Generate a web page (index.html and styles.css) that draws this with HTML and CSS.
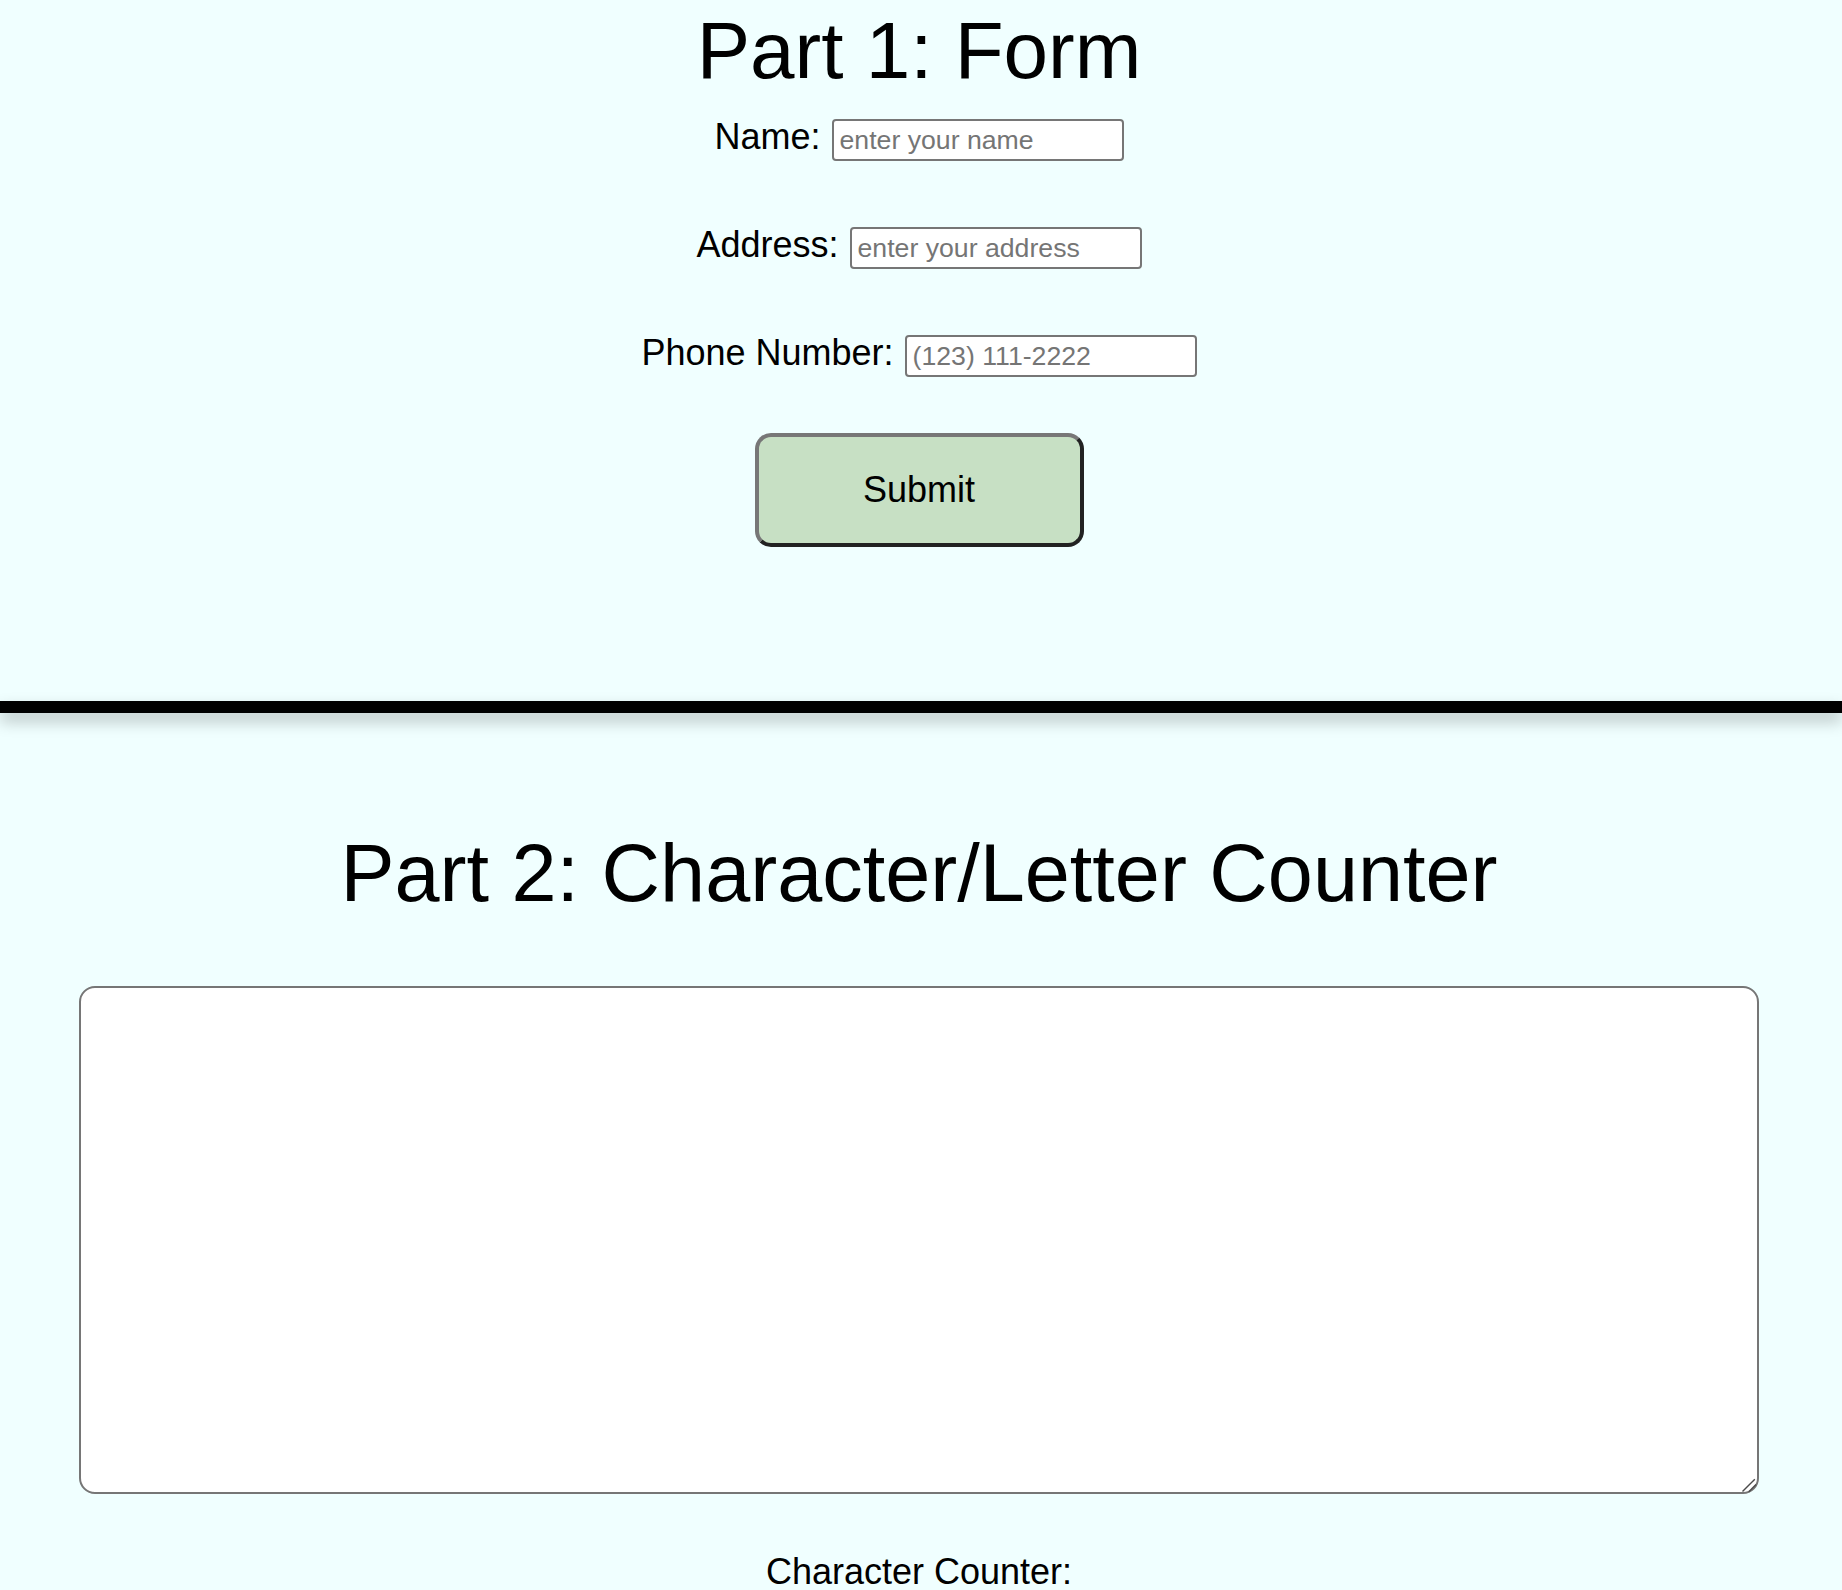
FILE: index.html
```html
<!DOCTYPE html>
<html lang="en">
<head>
<meta charset="utf-8">
<title>Form and Character Counter</title>
<link rel="stylesheet" href="styles.css">
</head>
<body>
<section class="part part-form">
  <h1 class="title">Part 1: Form</h1>
  <form class="form">
    <div class="fields">
      <div class="row">
        <label class="label" for="name">Name:</label>
        <input class="field" id="name" type="text" placeholder="enter your name">
      </div>
      <div class="row">
        <label class="label" for="address">Address:</label>
        <input class="field" id="address" type="text" placeholder="enter your address">
      </div>
      <div class="row">
        <label class="label" for="phone">Phone Number:</label>
        <input class="field" id="phone" type="text" placeholder="(123) 111-2222">
      </div>
    </div>
    <button class="submit" type="button">Submit</button>
  </form>
</section>
<div class="divider"></div>
<section class="part part-counter">
  <h1 class="title title-wide">Part 2: Character/Letter Counter</h1>
  <div class="text-wrap">
    <textarea class="text-input"></textarea>
    <svg class="grip" width="20" height="20" viewBox="0 0 20 20" aria-hidden="true">
      <line x1="3.5" y1="17.5" x2="15.8" y2="5.2" stroke="#4a4a4a" stroke-width="1.4"/>
      <line x1="9.8" y1="17.8" x2="17" y2="10.6" stroke="#4a4a4a" stroke-width="1.4"/>
    </svg>
  </div>
  <p class="counter">Character Counter:</p>
</section>
</body>
</html>
```

FILE: styles.css
```css
html, body {
  margin: 0;
  padding: 0;
}

body {
  background: #f0ffff;
  color: #000;
  font-family: "Liberation Sans", Arial, Helvetica, sans-serif;
}

.part {
  padding-right: 4px;
  text-align: center;
}

.part-form {
  padding-top: 11px;
  padding-bottom: 154.5px;
}

.part-counter {
  padding-top: 120.3px;
}

.title {
  margin: 0;
  font-size: 80px;
  line-height: 80px;
  font-weight: normal;
}

.title-wide {
  font-size: 81px;
}

.form {
  margin: 24.5px 0 0;
  display: flex;
  flex-direction: column;
  align-items: center;
}

.fields {
  display: flex;
  flex-direction: column;
  align-items: center;
  gap: 62px;
}

.row {
  height: 46px;
  display: flex;
  align-items: baseline;
  justify-content: center;
  gap: 11px;
}

.label {
  font-size: 36px;
  line-height: 42px;
}

.field {
  box-sizing: border-box;
  width: 292px;
  height: 42px;
  padding: 0 6px;
  margin: 0;
  border: 2px solid #767676;
  border-radius: 4px;
  background: #fff;
  font-family: "Liberation Sans", Arial, Helvetica, sans-serif;
  font-size: 26.67px;
  color: #000;
}

.field::placeholder {
  color: #757575;
}

.submit {
  box-sizing: border-box;
  margin-top: 55px;
  width: 329px;
  height: 114px;
  padding: 0;
  border-width: 4px;
  border-style: solid;
  border-color: #777 #222 #222 #777;
  border-radius: 16px;
  background: #c7e0c4;
  font-family: "Liberation Sans", Arial, Helvetica, sans-serif;
  font-size: 36px;
  color: #000;
}

.divider {
  height: 12px;
  background: #000;
  box-shadow: 0 8px 16px rgba(0, 0, 0, 0.25);
  position: relative;
}

.text-wrap {
  position: relative;
  width: 1680px;
  height: 508px;
  margin: 72.7px auto 0;
}

.text-input {
  display: block;
  box-sizing: border-box;
  width: 100%;
  height: 100%;
  margin: 0;
  border: 2px solid #767676;
  border-radius: 16px;
  background: #fff;
  resize: none;
  font-family: "Liberation Sans", Arial, Helvetica, sans-serif;
  font-size: 26.67px;
}

.grip {
  position: absolute;
  right: 0;
  bottom: 0;
  pointer-events: none;
}

.counter {
  margin: 57.5px 0 0;
  font-size: 36px;
  line-height: 42px;
}
```
